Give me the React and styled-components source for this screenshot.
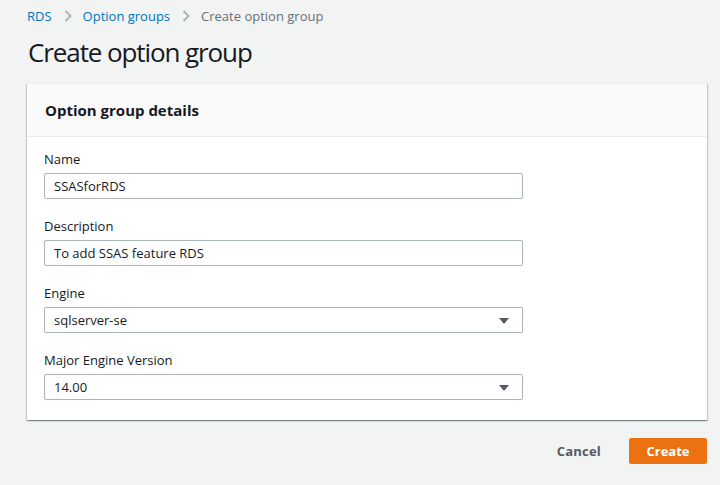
import React from 'react';
import styled, { createGlobalStyle } from 'styled-components';

const GlobalStyle = createGlobalStyle`
  body {
    margin: 0;
    background: #f2f3f3;
    font-family: "Open Sans", "Noto Sans", Arial, sans-serif;
    color: #16191f;
  }
`;

const Page = styled.div`
  padding: 6px 13px 20px 27px;
  min-height: 485px;
  box-sizing: border-box;
`;

const Crumbs = styled.nav`
  display: flex;
  align-items: center;
  height: 20px;
  font-size: 13px;
`;

const CrumbLink = styled.a`
  color: #0073bb;
  text-decoration: none;
`;

const CrumbCurrent = styled.span`
  color: #687078;
`;

const Chevron = styled.svg`
  margin: 0 11px 0 12px;
  display: block;
`;

const Title = styled.h1`
  margin: 9px 0 0 1px;
  font-size: 26px;
  font-weight: 400;
  line-height: 34px;
  letter-spacing: -1.1px;
`;

const Panel = styled.section`
  margin-top: 14px;
  background: #fff;
  border-top: 1px solid #eaeded;
  box-shadow: 0 1px 1px 0 rgba(0, 28, 36, 0.3), 1px 1px 1px 0 rgba(0, 28, 36, 0.15),
    -1px 1px 1px 0 rgba(0, 28, 36, 0.15);
`;

const PanelHeader = styled.header`
  background: #fafafa;
  border-bottom: 1px solid #eaeded;
  height: 52px;
  display: flex;
  align-items: center;
  padding: 0 18px;
`;

const PanelTitle = styled.h2`
  margin: 0;
  font-size: 15px;
  font-weight: 700;
`;

const PanelBody = styled.div`
  padding: 12px 17px 20px;
  display: flex;
  flex-direction: column;
  gap: 17px;
`;

const Field = styled.div`
  display: flex;
  flex-direction: column;
  gap: 4px;
`;

const Label = styled.label`
  font-size: 13px;
  line-height: 20px;
  color: #16191f;
`;

const Control = styled.div`
  position: relative;
  width: 479px;
  height: 26px;
  box-sizing: border-box;
  border: 1px solid #aab7b8;
  border-radius: 2px;
  background: #fff;
  display: flex;
  align-items: center;
  padding: 0 9px;
  font-size: 13px;
  color: #16191f;
`;

const Caret = styled.span`
  position: absolute;
  right: 13px;
  top: 10px;
  width: 0;
  height: 0;
  border-left: 5px solid transparent;
  border-right: 5px solid transparent;
  border-top: 6px solid #545b64;
`;

const Actions = styled.div`
  display: flex;
  justify-content: flex-end;
  align-items: center;
  gap: 28px;
  margin-top: 18px;
`;

const TextButton = styled.button`
  background: none;
  border: none;
  padding: 0;
  font: inherit;
  font-size: 13px;
  font-weight: 700;
  color: #545b64;
  letter-spacing: 0.2px;
`;

const PrimaryButton = styled.button`
  width: 78px;
  height: 26px;
  background: #ec7211;
  border: 1px solid #ec7211;
  border-radius: 2px;
  color: #fff;
  font: inherit;
  font-size: 13px;
  font-weight: 700;
`;

const fields = [
  { label: 'Name', value: 'SSASforRDS' },
  { label: 'Description', value: 'To add SSAS feature RDS' },
  { label: 'Engine', value: 'sqlserver-se', select: true },
  { label: 'Major Engine Version', value: '14.00', select: true },
];

const Sep = () => (
  <Chevron width="8" height="12" viewBox="0 0 8 12">
    <path d="M1.5 1l5 5-5 5" fill="none" stroke="#aab7b8" strokeWidth="2" />
  </Chevron>
);

export default function App() {
  return (
    <>
      <GlobalStyle />
      <Page>
        <Crumbs>
          <CrumbLink href="#">RDS</CrumbLink>
          <Sep />
          <CrumbLink href="#">Option groups</CrumbLink>
          <Sep />
          <CrumbCurrent>Create option group</CrumbCurrent>
        </Crumbs>
        <Title>Create option group</Title>
        <Panel>
          <PanelHeader>
            <PanelTitle>Option group details</PanelTitle>
          </PanelHeader>
          <PanelBody>
            {fields.map((f) => (
              <Field key={f.label}>
                <Label>{f.label}</Label>
                <Control>
                  {f.value}
                  {f.select && <Caret />}
                </Control>
              </Field>
            ))}
          </PanelBody>
        </Panel>
        <Actions>
          <TextButton>Cancel</TextButton>
          <PrimaryButton>Create</PrimaryButton>
        </Actions>
      </Page>
    </>
  );
}
